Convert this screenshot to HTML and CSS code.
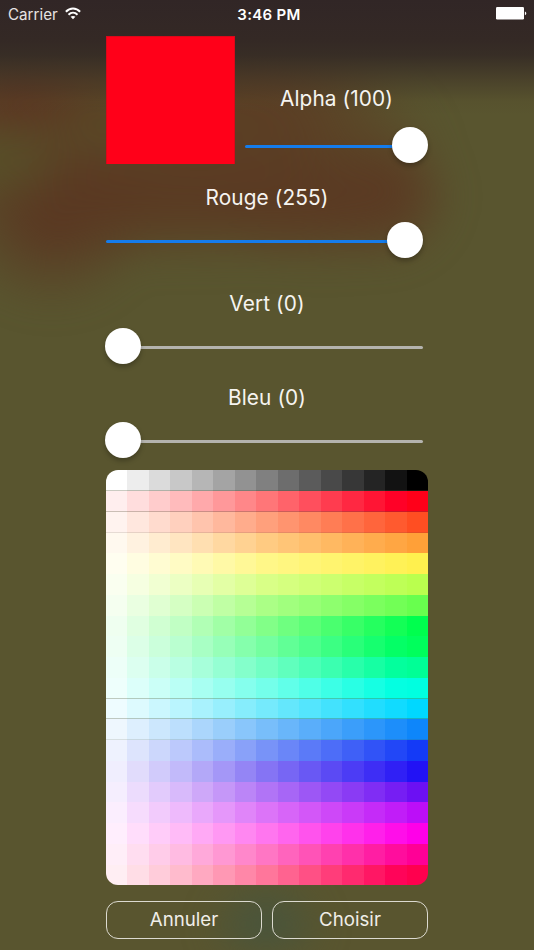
FILE: index.html
```html
<!DOCTYPE html>
<html lang="fr">
<head>
<meta charset="utf-8">
<title>Couleur</title>
<link rel="stylesheet" href="styles.css">
</head>
<body>
<div class="screen">
  <header class="status">
    <div class="carrier"><span>Carrier</span>
      <svg class="wifi" viewBox="0 0 16 13" width="16" height="13" fill="none" stroke="#fff" stroke-width="2">
        <path d="M.9 4.8C4.9.5 11.1.5 15.1 4.8M3.5 7.7c2.6-2.5 6.4-2.5 9 0"/>
        <path d="M8 12.2 5.6 9.8c1.3-1.2 3.5-1.2 4.8 0z" fill="#fff" stroke="none"/>
      </svg>
    </div>
    <div class="time">3:46 PM</div>
    <svg class="battery" viewBox="0 0 31 13" width="31" height="13" fill="#fff">
      <rect x="0" y="0" width="28" height="12.5" rx="1.2"/><path d="M28.9 4.5c1.9.6 1.9 3.2 0 3.8z"/>
    </svg>
  </header>
  <main class="picker">
    <section class="top">
      <div class="preview"></div>
      <div class="alpha">
        <div class="label label-alpha">Alpha (100)</div>
        <div class="slider"><i class="fill"></i><i class="thumb"></i></div>
      </div>
    </section>
    <section class="channel rouge">
      <div class="label">Rouge (255)</div>
      <div class="slider"><i class="fill"></i><i class="thumb"></i></div>
    </section>
    <section class="channel vert">
      <div class="label">Vert (0)</div>
      <div class="slider"><i class="thumb"></i><i class="rest"></i></div>
    </section>
    <section class="channel bleu">
      <div class="label">Bleu (0)</div>
      <div class="slider"><i class="thumb"></i><i class="rest"></i></div>
    </section>
    <div class="palette" id="palette"></div>
    <div class="actions">
      <button type="button">Annuler</button>
      <button type="button">Choisir</button>
    </div>
  </main>
</div>
<script src="palette.js"></script>
</body>
</html>
```
FILE: palette.js
```js
// Middle and end colour of each row; negative values saturate early.
const hues = [
  [[255, 118, 120], [255, -18, 25]],
  [[255, 160, 124], [255, 78, 34]],
  [[255, 203, 130], [255, 160, 56]],
  [[255, 247, 136], [255, 240, 78]],
  [[217, 255, 135], [186, 255, 78]],
  [[171, 255, 134], [104, 255, 78]],
  [[130, 255, 136], [0, 255, 78]],
  [[116, 255, 160], [-15, 255, 92]],
  [[114, 255, 196], [-15, 255, 150]],
  [[116, 255, 234], [-15, 255, 224]],
  [[117, 234, 252], [0, 216, 255]],
  [[120, 190, 250], [14, 134, 250]],
  [[120, 147, 248], [20, 58, 247]],
  [[133, 116, 244], [34, 18, 245]],
  [[177, 116, 246], [108, 16, 243]],
  [[220, 116, 248], [188, 14, 248]],
  [[255, 118, 239], [255, -3, 232]],
  [[255, 118, 196], [255, -5, 150]],
  [[255, 118, 155], [255, -15, 78]]
];
const columns = 15;
const palette = document.getElementById('palette');
// Rows whose lower edge shows a hairline of the background.
const seams = { 0: 'seam', 1: 'seam', 2: 'seam-light', 10: 'seam', 11: 'seam', 12: 'seam-light' };

function addRow(index, shade) {
  const row = document.createElement('div');
  row.className = `row ${seams[index] || ''}`;
  for (let i = 0; i < columns; i++) {
    const cell = document.createElement('span');
    cell.style.backgroundColor = `rgb(${shade(i).map(v => Math.max(0, Math.round(v))).join(',')})`;
    row.appendChild(cell);
  }
  palette.appendChild(row);
}

addRow(0, i => Array(3).fill(255 * (1 - i / (columns - 1))));
hues.forEach(([mid, end], n) => addRow(n + 1, i => mid.map((m, c) =>
  i <= 7 ? 255 + (m - 255) * (i + 1) / 8 : m + (end[c] - m) * (i - 7) / 7)));
```
FILE: styles.css
```css
* { box-sizing: border-box; }
body { margin: 0; }
.screen {
  position: relative;
  isolation: isolate;
  width: 534px;
  height: 950px;
  overflow: hidden;
  color: #fff;
  font-family: Inter, Roboto, sans-serif;
  background: #59552f;
}
/* Out-of-focus wallpaper behind the controls */
.screen::before {
  content: "";
  position: absolute;
  z-index: -2;
  inset: 0 -60px;
  filter: blur(15px);
  background:
    radial-gradient(ellipse 60px 55px at 326px 928px, #48553d 0, rgba(72,85,61,.8) 35%, rgba(72,85,61,0) 100%),
    radial-gradient(ellipse 135px 55px at 75px 95px, rgba(92,50,32,1), rgba(92,55,33,0)),
    radial-gradient(ellipse 65px 42px at 152px 115px, rgba(88,78,40,1), rgba(89,75,40,0)),
    radial-gradient(ellipse 80px 50px at 55px 158px, rgba(87,80,40,1), rgba(87,80,40,0)),
    radial-gradient(ellipse 100px 85px at 112px 228px, rgba(90,54,33,.9), rgba(90,56,33,0)),
    radial-gradient(ellipse 170px 70px at 160px 197px, rgba(90,54,33,.8), rgba(90,56,33,0)),
    radial-gradient(ellipse 180px 70px at 320px 192px, rgba(90,57,34,.85), rgba(90,57,34,0)),
    radial-gradient(ellipse 130px 70px at 385px 203px, rgba(91,55,34,.85), rgba(91,55,34,0)),
    radial-gradient(ellipse 70px 75px at 447px 193px, rgba(91,57,34,.9), rgba(91,57,34,0)),
    radial-gradient(ellipse 140px 80px at 325px 105px, rgba(92,60,36,.85), rgba(92,60,36,0)),
    radial-gradient(ellipse 260px 125px at 245px 145px, rgba(91,67,37,1) 0, rgba(91,67,37,.9) 45%, rgba(91,67,37,0));
}
.screen::after {
  content: "";
  position: absolute;
  z-index: -1;
  inset: 0 0 auto;
  height: 115px;
  background: linear-gradient(#312626 0, #342925 35%, rgba(53,43,37,.93) 48%, rgba(60,48,38,.5) 70%, rgba(75,65,40,.15) 88%, rgba(80,70,42,0));
}
.status {
  display: grid;
  grid-template-columns: 1fr auto 1fr;
  align-items: center;
  height: 28px;
  padding: 0 8px;
  font-size: 15px;
  line-height: 28px;
}
.carrier { display: flex; align-items: center; gap: 7px; color: #e6e3e2; font-size: 15.2px; }
.carrier span { padding-top: 1px; }
.wifi { margin-top: -3px; }
.time { font-weight: 600; font-size: 15px; letter-spacing: .3px; padding: 1px 0 0 4px; }
.battery { justify-self: end; margin: -2px -1px 0 0; }
.picker { width: 322px; margin: 8px 0 0 106px; }
.top { display: flex; gap: 10px; }
.preview { width: 129px; height: 128px; background: #ff0019; border: solid rgba(190,15,25,.55); border-width: 1px 1px 0; }
.alpha { width: 183px; padding-top: 48px; }
.label { height: 30px; line-height: 30px; text-align: center; font-size: 20.8px; color: #f6f4f0; letter-spacing: .1px; }
.alpha .slider { margin-top: 13px; }
.channel .slider { width: 317px; margin-top: 9px; }
.slider { display: flex; align-items: center; height: 36px; }
.fill, .rest { flex: 1; height: 3px; border-radius: 2px; margin-top: 3px; }
.fill { background: #157cec; margin-right: -2px; }
.rest { background: #b4b3ae; margin-left: -2px; }
.thumb { position: relative; flex: none; width: 36px; height: 36px; border-radius: 50%; background: #fff; box-shadow: 0 3px 5px rgba(0,0,0,.26); }
.thumb:first-child { margin-left: -1px; }
.rouge { margin-top: 19px; }
.rouge .slider { margin-top: 8.5px; }
.vert { margin-top: 31.5px; }
.bleu { margin-top: 19px; }
.palette {
  display: grid;
  grid-template-rows: repeat(20, 1fr);
  height: 415px;
  margin-top: 12.3px;
  border-radius: 12px;
  overflow: hidden;
}
.row { display: grid; grid-template-columns: repeat(15, 1fr); position: relative; }
.seam::after, .seam-light::after {
  content: "";
  position: absolute;
  inset: auto 0 0;
  height: 1px;
  background: rgba(80,78,50,.3);
}
.seam-light::after { background: rgba(80,78,50,.14); }
.actions { display: grid; grid-template-columns: 1fr 1fr; gap: 10px; margin-top: 15.7px; }
.actions button {
  height: 38px;
  padding: 0;
  border: 1.5px solid #dcdad0;
  border-radius: 12px;
  background: none;
  color: #f0eee8;
  font: 400 18.7px/35px Inter, Roboto, sans-serif;
}
```
